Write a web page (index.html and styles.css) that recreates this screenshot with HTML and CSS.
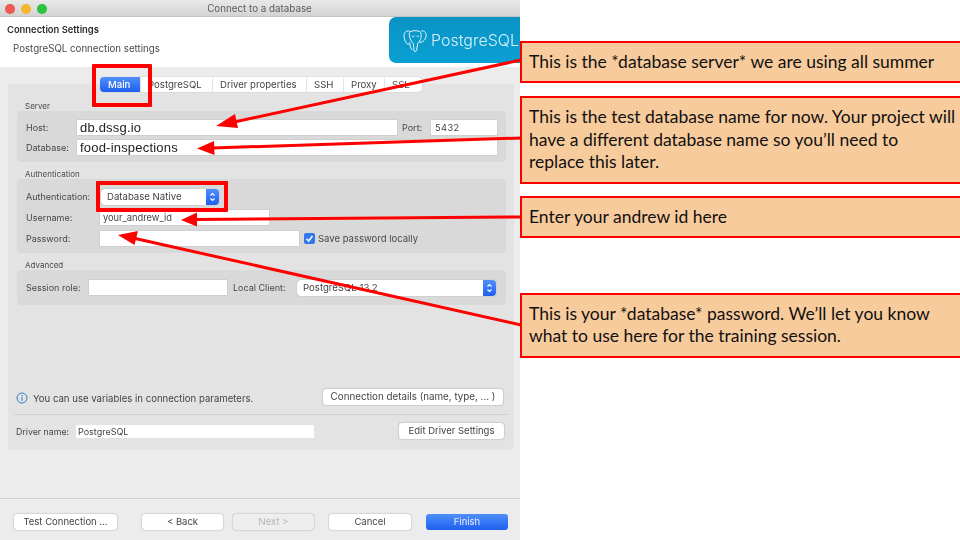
FILE: index.html
```html
<!DOCTYPE html>
<html lang="en">
<head>
<meta charset="utf-8">
<title>Connect to a database</title>
<link rel="stylesheet" href="styles.css">
</head>
<body>
<div class="slide">
  <section class="dialog">
    <header class="titlebar">
      <div class="lights"><i class="light red"></i><i class="light yellow"></i><i class="light green"></i></div>
      <span class="title">Connect to a database</span>
    </header>
    <div class="head">
      <div class="head-text">
        <strong>Connection Settings</strong>
        <span>PostgreSQL connection settings</span>
      </div>
      <div class="logo">
        <svg class="elephant" viewBox="0 0 24 24" fill="none" stroke="#e4f5fc" stroke-width="1" stroke-linecap="round" stroke-linejoin="round">
          <path d="M6 1.500C3 1 .8 3 1 6.500c.2 2.500 1.200 5.500 2.500 7.300 1 1.300 2.600 1 3.200-.5"/>
          <path d="M18.500 1.500c3-.5 5 1.500 4.600 5-.3 2.300-1.400 4-2.900 5.200-1 .8-2 1.200-3.200 1.300"/>
          <path d="M7 2.200C9.500.8 14.500.8 17 2.200c1.400 1 1.400 3.500 1 6-.4 2.500-1.900 4.500-3.200 5.500-.6 2.200-.5 5.300-1.700 7.800-.6 1.100-1.900.9-2.200-.5-.3-2-.2-4.800-.5-6.800C8.800 12.500 7 10 6.500 7 6.200 5 6 3.200 7 2.200z"/>
          <path d="M9 6.500c.8 1 1.700 1 2.200 0M15.800 6.500c-.8.800-1.500.800-2 0"/>
          <path d="M6.800 14c.3 2.500.6 5 2.200 6.200"/>
        </svg>
        <span class="logo-text">PostgreSQL</span>
      </div>
    </div>
    <div class="body">
      <nav class="tabs">
        <span class="tab tab-main active">Main</span>
        <span class="tab tab-pg">PostgreSQL</span>
        <span class="tab tab-driver">Driver properties</span>
        <span class="tab tab-ssh">SSH</span>
        <span class="tab tab-proxy">Proxy</span>
        <span class="tab tab-ssl">SSL</span>
      </nav>
      <div class="panel">
        <div class="legend legend-first">Server</div>
        <div class="group group-server">
          <div class="row">
            <label class="lab lab-server">Host:</label>
            <div class="field big grow">db.dssg.io</div>
            <label class="lab lab-port">Port:</label>
            <div class="field port">5432</div>
          </div>
          <div class="row">
            <label class="lab lab-server">Database:</label>
            <div class="field big grow">food-inspections</div>
          </div>
        </div>
        <div class="legend">Authentication</div>
        <div class="group group-auth">
          <div class="row">
            <label class="lab lab-auth">Authentication:</label>
            <div class="select select-auth"><span>Database Native</span>
              <i class="stepper"><svg viewBox="0 0 13 16" fill="none" stroke="#fff" stroke-width="1.100"><path d="M4.500 6.500 6.500 4.500l2 2M4.500 9.500l2 2 2-2"/></svg></i>
            </div>
          </div>
          <div class="row">
            <label class="lab lab-auth2">Username:</label>
            <div class="field user">your_andrew_id</div>
          </div>
          <div class="row">
            <label class="lab lab-auth2">Password:</label>
            <div class="field pass"></div>
            <i class="check"><svg viewBox="0 0 11 11" fill="none" stroke="#fff" stroke-width="1.500"><path d="M2.500 5.800 4.600 8 8.500 3"/></svg></i>
            <span class="lab save">Save password locally</span>
          </div>
        </div>
        <div class="legend">Advanced</div>
        <div class="group group-adv">
          <div class="row">
            <label class="lab lab-session">Session role:</label>
            <div class="field session"></div>
            <label class="lab lab-client">Local Client:</label>
            <div class="select select-client"><span>PostgreSQL 13.2</span>
              <i class="stepper"><svg viewBox="0 0 13 16" fill="none" stroke="#fff" stroke-width="1.100"><path d="M4.500 6.500 6.500 4.500l2 2M4.500 9.500l2 2 2-2"/></svg></i>
            </div>
          </div>
        </div>
        <div class="info-row">
          <svg class="info-icon" viewBox="0 0 12 12" fill="none"><circle cx="6" cy="6" r="5" stroke="#3b7fc4"/><path d="M6 5.200v3.600M6 3v1.200" stroke="#3b7fc4" stroke-width="1.100"/></svg>
          <span class="info-text">You can use variables in connection parameters.</span>
          <button class="btn btn-details">Connection details (name, type, ... )</button>
        </div>
        <div class="driver-row">
          <label class="lab lab-driver">Driver name:</label>
          <div class="field driver">PostgreSQL</div>
          <button class="btn btn-edit">Edit Driver Settings</button>
        </div>
      </div>
    </div>
    <footer class="footer">
      <button class="btn btn-test">Test Connection ...</button>
      <button class="btn btn-back">&lt; Back</button>
      <button class="btn btn-next" disabled>Next &gt;</button>
      <button class="btn btn-cancel">Cancel</button>
      <button class="btn btn-finish">Finish</button>
    </footer>
  </section>

  <aside class="notes">
    <p class="note gap-a">This is the *database server* we are using all summer</p>
    <p class="note gap-b">This is the test database name for now. Your project will have a different database name so you’ll need to replace this later.</p>
    <p class="note gap-c">Enter your andrew id here</p>
    <p class="note">This is your *database* password. We’ll let you know what to use here for the training session.</p>
  </aside>

  <div class="mark mark-tab"></div>
  <div class="mark mark-select"></div>
  <svg class="arrows" viewBox="0 0 960 540" fill="none" stroke="#fe0000" stroke-width="3">
    <path d="M521 60 232 122.500"/><polygon class="head" points="216,126 235,114 238,128"/>
    <path d="M521 138 212 148"/><polygon class="head" points="197,148.500 214,141 214.500,155"/>
    <path d="M521 217 195 219.500"/><polygon class="head" points="181,220 197,212.500 197,226.500"/>
    <path d="M521 325 133 238"/><polygon class="head" points="118,235 138,231 134.500,245"/>
  </svg>
</div>
</body>
</html>
```
FILE: styles.css
```css
* { box-sizing: border-box; }
html, body { margin: 0; padding: 0; background: #fff; }
.slide {
  position: relative;
  width: 960px;
  height: 540px;
  overflow: hidden;
  display: flex;
  background: #fff;
  font-family: "Inter", "Liberation Sans", sans-serif;
}

/* dialog */
.dialog {
  width: 520px;
  height: 540px;
  flex: none;
  display: flex;
  flex-direction: column;
  background: #ececec;
  color: #3c3c3c;
  font-size: 9.5px;
  filter: blur(0.35px);
}
.titlebar {
  position: relative;
  height: 17px;
  flex: none;
  display: flex;
  align-items: center;
  justify-content: center;
  background: linear-gradient(#e9e9e9, #d3d3d3);
  border-bottom: 1px solid #c4c4c4;
  border-radius: 4px 4px 0 0;
}
.title { font-size: 9.800px; color: #5c5c5c; margin-left: -1px; }
.lights { position: absolute; left: 5px; top: 4px; display: flex; gap: 6.500px; }
.light { width: 9.500px; height: 9.500px; border-radius: 50%; }
.red { background: #ee5a52; }
.yellow { background: #f5b52e; }
.green { background: #2cc240; }

.head {
  height: 50px;
  flex: none;
  display: flex;
  justify-content: space-between;
  background: #fff;
  overflow: hidden;
}
.head-text { display: flex; flex-direction: column; padding: 7px 0 0 7px; }
.head-text strong { font-size: 9.400px; font-weight: 600; color: #2a2a2a; line-height: 11px; }
.head-text span { margin: 8px 0 0 6px; font-size: 9.700px; color: #4a4a4a; line-height: 11px; }
.logo {
  width: 131px;
  height: 46px;
  display: flex;
  align-items: center;
  padding-left: 14px;
  gap: 4px;
  background: linear-gradient(#0a93c4, #0aa0d4);
  border-radius: 7px 0 0 7px;
}
.elephant { width: 24px; height: 25px; flex: none; margin-top: 2px; }
.logo-text {
  font-weight: 300;
  font-size: 16px;
  color: #d8f0fa;
  white-space: nowrap;
}

.body {
  flex: 1;
  display: flex;
  flex-direction: column;
  padding: 10px 6px 0 8px;
  border-bottom: 1px solid #d0d0d0;
}
.tabs {
  position: relative;
  z-index: 1;
  align-self: flex-start;
  margin-left: 92px;
  width: 322px;
  height: 15px;
  display: flex;
  background: #fff;
  border-radius: 4px;
  box-shadow: 0 0 1px rgba(0,0,0,.35);
  font-size: 9.600px;
  line-height: 15px;
  color: #444;
}
.tab { display: block; padding-left: 7px; border-right: 1px solid #e4e4e4; white-space: nowrap; }
.tab-main { width: 41px; padding-left: 8px; }
.tab-pg { width: 72px; }
.tab-driver { width: 94px; }
.tab-ssh { width: 37px; }
.tab-proxy { width: 41px; }
.tab-ssl { border: 0; }
.active {
  background: linear-gradient(#4f8ffa, #1f5ff0);
  color: #fff;
  border-radius: 4px 0 0 4px;
  font-weight: 500;
}
.panel {
  height: 366px;
  margin-top: -8px;
  padding: 17px 8px 0 9px;
  background: #e3e3e3;
  border-radius: 4px;
  display: flex;
  flex-direction: column;
}
.legend { height: 10px; line-height: 10px; margin: 7px 0 0 8px; font-size: 8px; color: #4a4a4a; }
.legend-first { margin-top: 0; }
.group {
  background: #d9d9d9;
  border-radius: 4px;
  display: flex;
  flex-direction: column;
}
.group-server { height: 51px; padding: 9px 9px 0 9px; gap: 5px; }
.group-auth { height: 74px; padding: 10px 0 0 9px; gap: 6px; }
.group-adv { height: 35px; padding: 10px 0 0 9px; }
.row { display: flex; align-items: center; height: 15px; white-space: nowrap; }
.lab { color: #484848; font-size: 9px; }
.lab-server { width: 51px; }
.lab-port { width: 29px; margin-left: 5px; }
.lab-auth { width: 66px; margin-right: 9px; }
.lab-auth2 { width: 74px; }
.lab-session { width: 63px; }
.lab-client { margin: 0 11px 0 6px; width: 53px; }
.lab-driver { width: 60px; font-size: 8.800px; margin-left: 2px; }
.save { margin-left: 3px; font-size: 9.500px; }
.field {
  height: 15px;
  line-height: 15px;
  background: #fff;
  box-shadow: 0 0 1px rgba(0,0,0,.25);
  padding-left: 3px;
  font-size: 9.300px;
  color: #444;
}
.grow { flex: 1; }
.big {
  font-family: "Liberation Sans", sans-serif;
  font-size: 13px;
  letter-spacing: 0.200px;
  color: #222;
}
.port { width: 66px; padding-left: 4px; letter-spacing: 0.400px; }
.user { width: 169px; }
.pass { width: 199px; }
.session { width: 138px; }
.driver { width: 238px; height: 13px; line-height: 13px; box-shadow: none; padding-left: 2px; font-size: 9px; }
.select {
  height: 16px;
  display: flex;
  align-items: center;
  justify-content: space-between;
  background: #fff;
  border-radius: 4px;
  box-shadow: 0 0 1px rgba(0,0,0,.4);
  padding-left: 6px;
  font-size: 9.600px;
  color: #444;
  overflow: hidden;
}
.select-auth { width: 118px; }
.select-client { width: 199px; }
.stepper {
  width: 13px;
  height: 16px;
  display: flex;
  background: linear-gradient(#4f8ffa, #1f5ff0);
}
.stepper svg { width: 13px; height: 16px; }
.check {
  width: 11px;
  height: 11px;
  margin-left: 5px;
  border-radius: 2px;
  background: #2f77ee;
  display: flex;
}
.check svg { width: 11px; height: 11px; }

.info-row {
  margin: 84px 0 0 -1px;
  height: 16px;
  display: flex;
  align-items: center;
  font-size: 9.600px;
  color: #444;
}
.info-icon { width: 12px; height: 12px; margin-top: 2px; flex: none; }
.info-text { margin: 3px 0 0 5px; flex: 1; }
.driver-row {
  margin: 9px -2px 0 -3px;
  padding-top: 8px;
  border-top: 1px solid #d2d2d2;
  display: flex;
  align-items: center;
}
.btn {
  height: 16px;
  padding: 0 0 1px;
  border: 0;
  border-radius: 3px;
  background: #fff;
  box-shadow: 0 0 1.500px rgba(0,0,0,.45);
  font: inherit;
  font-size: 9.500px;
  color: #444;
  white-space: nowrap;
}
.btn-details { width: 180px; margin-right: 3px; font-size: 9.800px; }
.btn-edit { width: 105px; margin: 0 4px 0 auto; }

.footer {
  height: 41px;
  flex: none;
  padding: 15px 0 0 14px;
  display: flex;
  align-items: flex-start;
}
.btn-test { width: 103px; }
.btn-back { width: 81px; margin-left: 25px; }
.btn-next { width: 81px; margin-left: 10px; background: #eeeeee; color: #b5b5b5; }
.btn-cancel { width: 82px; margin-left: 15px; }
.btn-finish {
  width: 82px;
  margin-left: 15px;
  color: #e6efff;
  background: linear-gradient(#4f8ffa, #1f5ff0);
  box-shadow: none;
}

/* notes */
.notes {
  width: 442px;
  flex: none;
  padding-top: 41px;
  display: flex;
  flex-direction: column;
  font-family: "Lato", "Liberation Sans", sans-serif;
}
.note {
  margin: 0;
  padding: 8px 3px 8px 7px;
  background: #f8cb9c;
  border: 2px solid #fe0000;
  font-size: 17.500px;
  line-height: 22.400px;
  color: #111;
}
.gap-a { margin-bottom: 13px; }
.gap-b { margin-bottom: 12px; }
.gap-c { margin-bottom: 55px; }

/* annotations on top of the screenshot */
.mark { position: absolute; border: 4px solid #fe0000; border-radius: 1px; }
.mark-tab { left: 92px; top: 64px; width: 60px; height: 43px; }
.mark-select { left: 96px; top: 181px; width: 132px; height: 31px; }
.arrows { position: absolute; left: 0; top: 0; width: 960px; height: 540px; pointer-events: none; }
.head { fill: #fe0000; stroke: none; }
```
